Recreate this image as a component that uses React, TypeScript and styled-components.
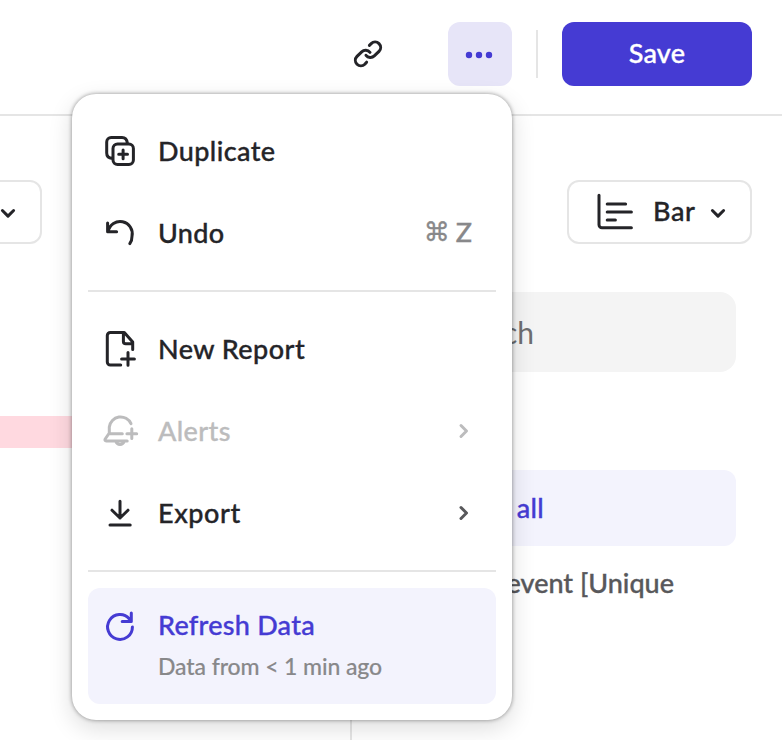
import React from "react";
import styled, { createGlobalStyle } from "styled-components";

const Global = createGlobalStyle`
  * { box-sizing: border-box; }
  body { margin: 0; background: #fff; overflow: hidden; }
`;

const ink = "#242428";
const violet = "#453bd3";
const line = "#e5e5e5";
const tint = "#f3f3fd";

const Page = styled.div`
  position: relative;
  width: 782px;
  height: 740px;
  overflow: hidden;
  background: #fff;
  color: ${ink};
  font: 500 27px/40px Lato, sans-serif;
`;

const Header = styled.header`
  height: 116px;
  padding: 22px 30px 0 0;
  display: flex;
  justify-content: flex-end;
  align-items: flex-start;
  border-bottom: 2px solid ${line};
`;

const IconButton = styled.button<{ $active?: boolean }>`
  width: 64px;
  height: 64px;
  padding: 0;
  border: 0;
  border-radius: 12px;
  display: grid;
  place-items: center;
  color: ${(p) => (p.$active ? violet : ink)};
  background: ${(p) => (p.$active ? "#e7e5f8" : "transparent")};
  margin-right: ${(p) => (p.$active ? 24 : 48)}px;
`;

const HeaderDivider = styled.div`
  width: 2px;
  height: 48px;
  margin: 8px 24px 0 0;
  background: ${line};
`;

const SaveButton = styled.button`
  width: 190px;
  height: 64px;
  padding: 0 0 2px;
  border: 0;
  border-radius: 12px;
  background: ${violet};
  color: #fff;
  font: inherit;
`;

const Text = styled.span<{ $track?: number }>`
  white-space: nowrap;
  letter-spacing: ${(p) => p.$track ?? 0}px;
  -webkit-text-stroke: 0.35px currentColor;
`;

const Toolbar = styled.div`
  height: 128px;
  padding: 64px 30px 0 0;
  display: flex;
  justify-content: space-between;
`;

const SelectBox = styled.button<{ $cut?: boolean }>`
  width: ${(p) => (p.$cut ? 102 : 185)}px;
  height: 64px;
  margin-left: ${(p) => (p.$cut ? -60 : 0)}px;
  padding: 0 24px 0 27px;
  border: 2px solid ${line};
  border-radius: 12px;
  background: #fff;
  display: flex;
  align-items: center;
  justify-content: flex-end;
  color: ${ink};
  font: inherit;
`;

const SelectText = styled(Text)`
  flex: 1;
  padding-bottom: 2px;
  margin-left: 17px;
  text-align: left;
`;

const Body = styled.div`
  display: flex;
  height: 496px;
`;

const ChartPane = styled.div`
  width: 350px;
  padding-top: 172px;
`;

const ChartBar = styled.div`
  height: 32px;
  width: 300px;
  background: #ffd9e0;
`;

const SidePane = styled.aside`
  flex: 1;
  padding: 48px 46px 0 30px;
  border-left: 2px solid ${line};
`;

const SearchField = styled.div`
  height: 80px;
  padding: 20px 202px 0 0;
  border-radius: 16px;
  background: #f4f4f4;
  color: #6e6e70;
  font-size: 30px;
  font-weight: 400;
  text-align: right;
`;

const Option = styled.div<{ $selected?: boolean }>`
  height: 76px;
  margin-top: ${(p) => (p.$selected ? 98 : 0)}px;
  padding: ${(p) => (p.$selected ? "18px 192px 0 0" : "17px 62px 0 0")};
  border-radius: 12px;
  text-align: right;
  color: ${(p) => (p.$selected ? violet : "#58585b")};
  background: ${(p) => (p.$selected ? tint : "transparent")};
`;

const Menu = styled.div`
  position: absolute;
  left: 72px;
  top: 94px;
  width: 440px;
  height: 626px;
  padding: 16px;
  border-radius: 24px;
  background: #fff;
  box-shadow: 0 0 4px rgba(0, 0, 0, 0.42), 0 8px 24px rgba(0, 0, 0, 0.14);
`;

const MenuItem = styled.div<{ $disabled?: boolean }>`
  height: 82px;
  padding: 0 24px 0 12px;
  display: flex;
  align-items: center;
  color: ${(p) => (p.$disabled ? "#bcbcbd" : ink)};
`;

const ItemLabel = styled(Text)`
  flex: 1;
  margin-left: 18px;
`;

const Shortcut = styled.span`
  display: flex;
  gap: 6px;
  padding-bottom: 2px;
  color: #88888a;
`;

const CommandKey = styled(Text)`
  font-family: "DejaVu Sans", sans-serif;
  font-size: 26px;
`;

const Separator = styled.div`
  height: 2px;
  margin: 16px 0;
  background: ${line};
`;

const RefreshItem = styled.div`
  height: 116px;
  padding: 18px 12px 0;
  display: flex;
  border-radius: 12px;
  background: ${tint};
  color: ${violet};
`;

const RefreshCopy = styled.div`
  margin: -1px 0 0 18px;
  display: flex;
  flex-direction: column;
  gap: 1px;
`;

const Caption = styled(Text)`
  color: #88888a;
  font-size: 23px;
  -webkit-text-stroke-width: 0.15px;
`;

const Muted = styled.span`
  color: #58585b;
`;

const Glyph = styled.svg`
  display: block;
  flex: none;
  fill: none;
  stroke: currentColor;
  stroke-linecap: round;
  stroke-linejoin: round;
`;

const Icon = ({ d, size = 40, weight = 3 }: { d: string; size?: number; weight?: number }) => (
  <Glyph width={size} height={size} viewBox={`0 0 ${size} ${size}`} strokeWidth={weight}>
    <path d={d} />
  </Glyph>
);

const icons = {
  link: "M21.4 11.4L23.2 9.6A5.3 5.3 0 0 1 31 17.4L26.3 21.9A5.6 5.6 0 0 1 18 21.3 M18.6 28.2L16.8 30.2A5.3 5.3 0 0 1 9 22.4L13.7 17.9A5.6 5.6 0 0 1 22 18.4",
  duplicate:
    "M17.5 13H28.9A4.5 4.5 0 0 1 33.4 17.5V28.9A4.5 4.5 0 0 1 28.9 33.4H17.5A4.5 4.5 0 0 1 13 28.9V17.5A4.5 4.5 0 0 1 17.5 13Z M12.2 27.4C8.8 27.2 6.7 25.3 6.7 22V10.9A4.5 4.5 0 0 1 11.2 6.4H22C25.3 6.4 27 8.6 27.4 12.2 M23.1 18.9V27.7 M18.7 23.3H27.5",
  undo: "M7.6 10V18.7H16.6 M8.2 18.2A12 12 0 0 1 32 23.2A12.4 12.4 0 0 1 29.8 30.6",
  report:
    "M20.7 36H10.3A3 3 0 0 1 7.3 33V6.4A3 3 0 0 1 10.3 3.4H24.3L32.7 13V20.4 M23.4 4V12.5A2.3 2.3 0 0 0 25.7 14.8H32.4 M28 23.4V36.2 M21.6 30H34.4",
  bell: "M31 12.6A11.4 11.4 0 0 0 9.3 16V22L5.2 28C4.6 29.2 5 30 6.2 30H27.2 M9.6 22.7H22.3 M15.8 30.4A4.4 4.4 0 0 0 24.2 30.4 M31.8 17.8V27.6 M26.9 22.7H36.7",
  download: "M20 8.3V25 M12 17.2L20 25L28 17.2 M10 32H30.2",
  refresh: "M32.4 20.9A12.4 12.4 0 1 1 29.4 12.9L31 15.2 M31.3 7V15.4H22.2",
};

const Right = () => <Icon size={16} d="M5 2.5L10.5 8L5 13.5" />;
const Down = () => <Icon size={16} d="M2.4 6.5L8 12.1L13.6 6.5" />;

export default function App() {
  return (
    <Page>
      <Global />
      <Header>
        <IconButton aria-label="Copy link">
          <Icon d={icons.link} />
        </IconButton>
        <IconButton $active aria-label="More">
          <Glyph width="30" height="10" viewBox="0 0 30 10" strokeWidth="6.4">
            <path d="M4 6h0M14 6h0M24 6h0" />
          </Glyph>
        </IconButton>
        <HeaderDivider />
        <SaveButton>
          <Text $track={0.2}>Save</Text>
        </SaveButton>
      </Header>
      <Toolbar>
        <SelectBox $cut aria-label="Chart options">
          <Down />
        </SelectBox>
        <SelectBox>
          <Icon d="M3 3.3V32.7A3 3 0 0 0 6 35.7H35.4 M11.2 12H29.6 M11.2 20H35.4 M11.2 28H19.4" />
          <SelectText $track={0.6}>Bar</SelectText>
          <Down />
        </SelectBox>
      </Toolbar>
      <Body>
        <ChartPane>
          <ChartBar />
        </ChartPane>
        <SidePane>
          <SearchField>Search</SearchField>
          <Option $selected>
            <Text $track={0.3}>Select all</Text>
          </Option>
          <Option>
            <Text>Any event [Unique</Text>
          </Option>
        </SidePane>
      </Body>
      <Menu>
        <MenuItem>
          <Icon d={icons.duplicate} />
          <ItemLabel $track={0.4}>Duplicate</ItemLabel>
        </MenuItem>
        <MenuItem>
          <Icon d={icons.undo} />
          <ItemLabel $track={0.3}>Undo</ItemLabel>
          <Shortcut>
            <CommandKey>⌘</CommandKey>
            <Text>Z</Text>
          </Shortcut>
        </MenuItem>
        <Separator />
        <MenuItem>
          <Icon d={icons.report} />
          <ItemLabel $track={0.45}>New Report</ItemLabel>
        </MenuItem>
        <MenuItem $disabled>
          <Icon d={icons.bell} />
          <ItemLabel $track={0.4}>Alerts</ItemLabel>
          <Right />
        </MenuItem>
        <MenuItem>
          <Icon d={icons.download} />
          <ItemLabel $track={0.55}>Export</ItemLabel>
          <Muted>
            <Right />
          </Muted>
        </MenuItem>
        <Separator />
        <RefreshItem>
          <Icon d={icons.refresh} />
          <RefreshCopy>
            <Text $track={0.25}>Refresh Data</Text>
            <Caption $track={-0.1}>Data from &lt; 1 min ago</Caption>
          </RefreshCopy>
        </RefreshItem>
      </Menu>
    </Page>
  );
}
